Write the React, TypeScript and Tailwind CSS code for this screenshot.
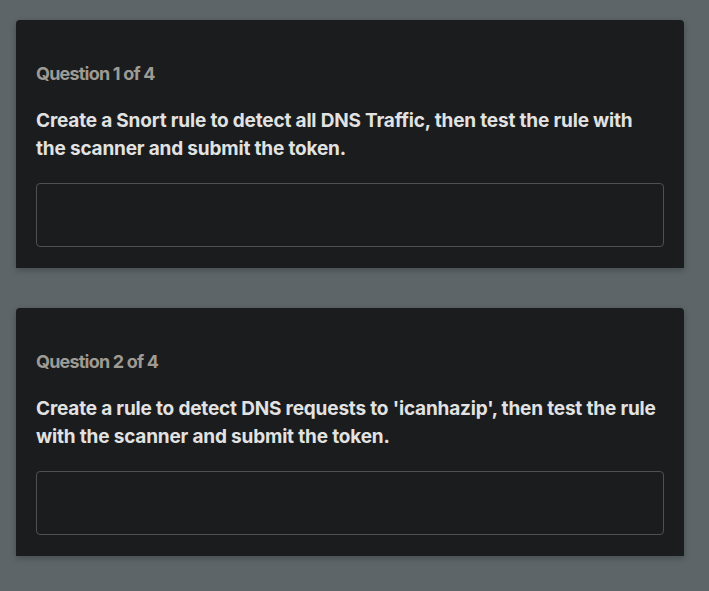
const QUESTIONS = [
  "Create a Snort rule to detect all DNS Traffic, then test the rule with the scanner and submit the token.",
  "Create a rule to detect DNS requests to 'icanhazip', then test the rule with the scanner and submit the token.",
];

function QuestionCard({ index, total, text }: { index: number; total: number; text: string }) {
  return (
    <div className="rounded-t-[4px] bg-[#1a1c1e] px-5 pt-[42px] pb-[21px] shadow-[0_2px_6px_rgba(0,0,0,0.25)]">
      <h3 className="text-[18px] leading-6 font-bold tracking-[-0.8px] text-[#9e9a94]">
        Question {index} of {total}
      </h3>
      <p className="mt-[21px] text-[19px] leading-7 font-bold tracking-[-0.18px] text-[#e2e2e2]">{text}</p>
      <input
        type="text"
        className="mt-5 block h-16 w-full rounded-[4px] border border-[#4f5052] bg-[#1a1c1e] px-3 text-[#e2e2e2] outline-none"
      />
    </div>
  );
}

export default function App() {
  return (
    <div
      className="min-h-screen bg-[#5d6569] px-4 pt-5 pb-8"
      style={{ fontFamily: "Inter, 'Noto Sans', sans-serif" }}
    >
      <div className="flex w-[668px] flex-col gap-10">
        {QUESTIONS.map((q, i) => (
          <QuestionCard key={i} index={i + 1} total={4} text={q} />
        ))}
      </div>
    </div>
  );
}
